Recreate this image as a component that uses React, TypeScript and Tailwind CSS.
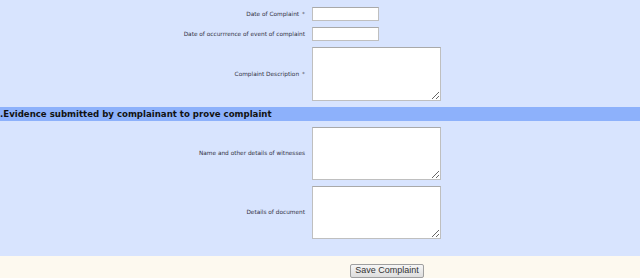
import React from 'react';

const labelCls = "w-[306px] pr-[1px] text-right text-[5.8px] text-[#333344] font-['DejaVu_Sans',Verdana,sans-serif]";
const inputCls = "h-[14px] w-[67px] bg-white border border-[#bfbfbf] border-t-[#a9a9a9]";
const areaCls = "w-[129px] bg-white border border-[#bfbfbf] border-t-[#a9a9a9] resize";

const Row: React.FC<{ label: string; required?: boolean; children: React.ReactNode }> = ({ label, required, children }) => (
  <div className="flex items-center gap-[6px]">
    <div className={labelCls}>
      {label}
      {required && <span className="ml-[3px] align-top text-[#555]">*</span>}
    </div>
    {children}
  </div>
);

export default function App() {
  return (
    <div className="w-[640px] h-[278px] bg-[#fdf9ef] font-['DejaVu_Sans',Verdana,sans-serif]">
      <div className="bg-[#d8e4fe] pt-[7px] pb-[17px] flex flex-col gap-[6px]">
        <Row label="Date of Complaint" required>
          <input className={inputCls} />
        </Row>
        <Row label="Date of occurrrence of event of complaint">
          <input className={inputCls} />
        </Row>
        <Row label="Complaint Description" required>
          <textarea className={`${areaCls} h-[54px]`} />
        </Row>
        <div className="h-[14px] bg-[#8db1fb] flex items-center text-[8.6px] font-bold text-[#111] leading-none">
          .Evidence submitted by complainant to prove complaint
        </div>
        <Row label="Name and other details of witnesses">
          <textarea className={`${areaCls} h-[53px]`} />
        </Row>
        <Row label="Details of document">
          <textarea className={`${areaCls} h-[53px]`} />
        </Row>
      </div>
      <div className="pl-[350px]">
        <button className="h-[14px] w-[74px] px-0 whitespace-nowrap border border-[#9f9f9f] rounded-[2px] bg-gradient-to-b from-[#f6f6f6] to-[#dddddd] text-[9px] leading-none text-[#333] font-['Liberation_Sans',Arial,sans-serif]">
          Save Complaint
        </button>
      </div>
    </div>
  );
}
